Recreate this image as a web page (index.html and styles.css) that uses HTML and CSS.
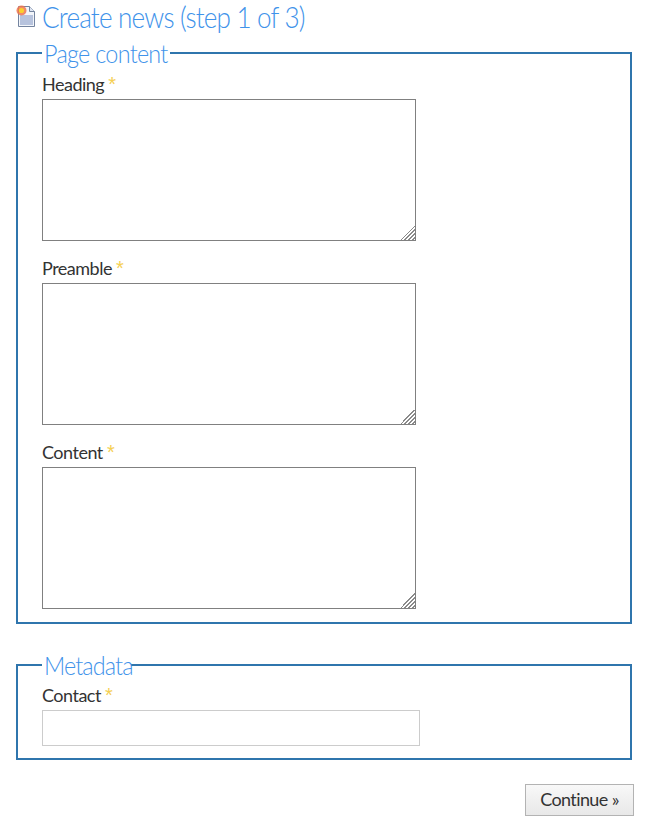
FILE: index.html
```html
<!DOCTYPE html>
<html lang="en">
<head>
    <meta charset="UTF-8">
    <title>Create news (step 1 of 3)</title>
    <link rel="stylesheet" href="styles.css">
</head>
<body>
    <h1 class="page-title">
        <svg class="page-icon" width="20" height="22" viewBox="0 0 20 22">
            <path d="M2.5 1.5h11l5 5v15h-16z" fill="#f2f5fa" stroke="#74849f"/>
            <path d="M13.5 1.5v5h5" fill="#dfe6f2" stroke="#74849f"/>
            <rect x="4" y="10" width="13" height="10" fill="#b7c3dd"/>
            <circle cx="5.5" cy="5.5" r="5" fill="#f0764e" opacity="0.85"/>
            <circle cx="5.5" cy="5.5" r="2.6" fill="#fbd02e"/>
        </svg>
        <span class="narrow">Create news (step 1 of 3)</span>
    </h1>
    <form>
        <fieldset class="group">
            <legend class="legend-page"><span class="narrow">Page content</span></legend>
            <div class="field">
                <label for="heading">Heading <span class="req">*</span></label>
                <textarea id="heading"></textarea>
            </div>
            <div class="field">
                <label for="preamble">Preamble <span class="req">*</span></label>
                <textarea id="preamble"></textarea>
            </div>
            <div class="field">
                <label for="content">Content <span class="req">*</span></label>
                <textarea id="content"></textarea>
            </div>
        </fieldset>
        <fieldset class="group group-meta">
            <legend class="legend-meta"><span class="narrow">Metadata</span></legend>
            <div class="field">
                <label for="contact">Contact <span class="req">*</span></label>
                <input type="text" id="contact">
            </div>
        </fieldset>
        <div class="actions">
            <button type="button" class="btn">Continue »</button>
        </div>
    </form>
</body>
</html>
```

FILE: styles.css
```css
body {
    margin: 0;
    padding: 0 19px 0 16px;
    font-family: "Lato", sans-serif;
    color: #333;
    background-color: #fff;
}
.narrow {
    display: inline-block;
    white-space: nowrap;
    transform: scaleX(0.9);
    transform-origin: left;
}
.page-title {
    display: flex;
    align-items: center;
    gap: 6px;
    box-sizing: border-box;
    height: 38px;
    margin: 0;
    padding-bottom: 5px;
    font-size: 29px;
    font-weight: 300;
    letter-spacing: -0.9px;
    color: #3f93ea;
}
.page-icon {
    flex: none;
    margin-top: -1px;
}
.group {
    margin: 0;
    padding: 5px 14px 13px 24px;
    border: 2px solid #2f75ad;
    min-width: 0;
}
.group-meta {
    margin-top: 26px;
    padding-top: 4px;
    padding-bottom: 12px;
}
.group legend {
    box-sizing: border-box;
    padding: 0 2px;
    font-size: 26px;
    font-weight: 300;
    letter-spacing: -0.8px;
    line-height: 30px;
    color: #3f93ea;
}
.group .legend-page {
    width: 128px;
}
.group .legend-meta {
    width: 89px;
    letter-spacing: -1px;
}
.field {
    display: flex;
    flex-direction: column;
    align-items: flex-start;
    margin-bottom: 16px;
}
.field:last-child {
    margin-bottom: 0;
}
.field label {
    height: 26px;
    font-size: 18px;
    letter-spacing: -0.5px;
    line-height: 22px;
}
.req {
    font-family: "Liberation Sans", sans-serif;
    font-size: 20px;
    letter-spacing: 0;
    color: #f5cf52;
}
.field textarea {
    display: block;
    box-sizing: border-box;
    width: 374px;
    height: 142px;
    margin: 0;
    border: 1px solid #808080;
    background-color: #fff;
}
.field textarea::-webkit-resizer {
    background:
        linear-gradient(135deg, #fff 50%, transparent 50%),
        repeating-linear-gradient(135deg, #fff 0 1px, #8a8a8a 1px 2.4px, #fff 2.4px 3px);
}
.field input {
    display: block;
    box-sizing: border-box;
    width: 378px;
    height: 36px;
    margin: 0;
    border: 1px solid #ccc;
    background-color: #fff;
}
.actions {
    display: flex;
    justify-content: flex-end;
    margin-top: 24px;
    margin-right: -2px;
}
.btn {
    box-sizing: border-box;
    width: 109px;
    height: 32px;
    padding: 0 0 2px;
    border: 1px solid #b3b3b3;
    background: linear-gradient(#f8f8f8, #e8e8e8);
    font-family: inherit;
    font-size: 18px;
    letter-spacing: -0.6px;
    color: #333;
}
```
